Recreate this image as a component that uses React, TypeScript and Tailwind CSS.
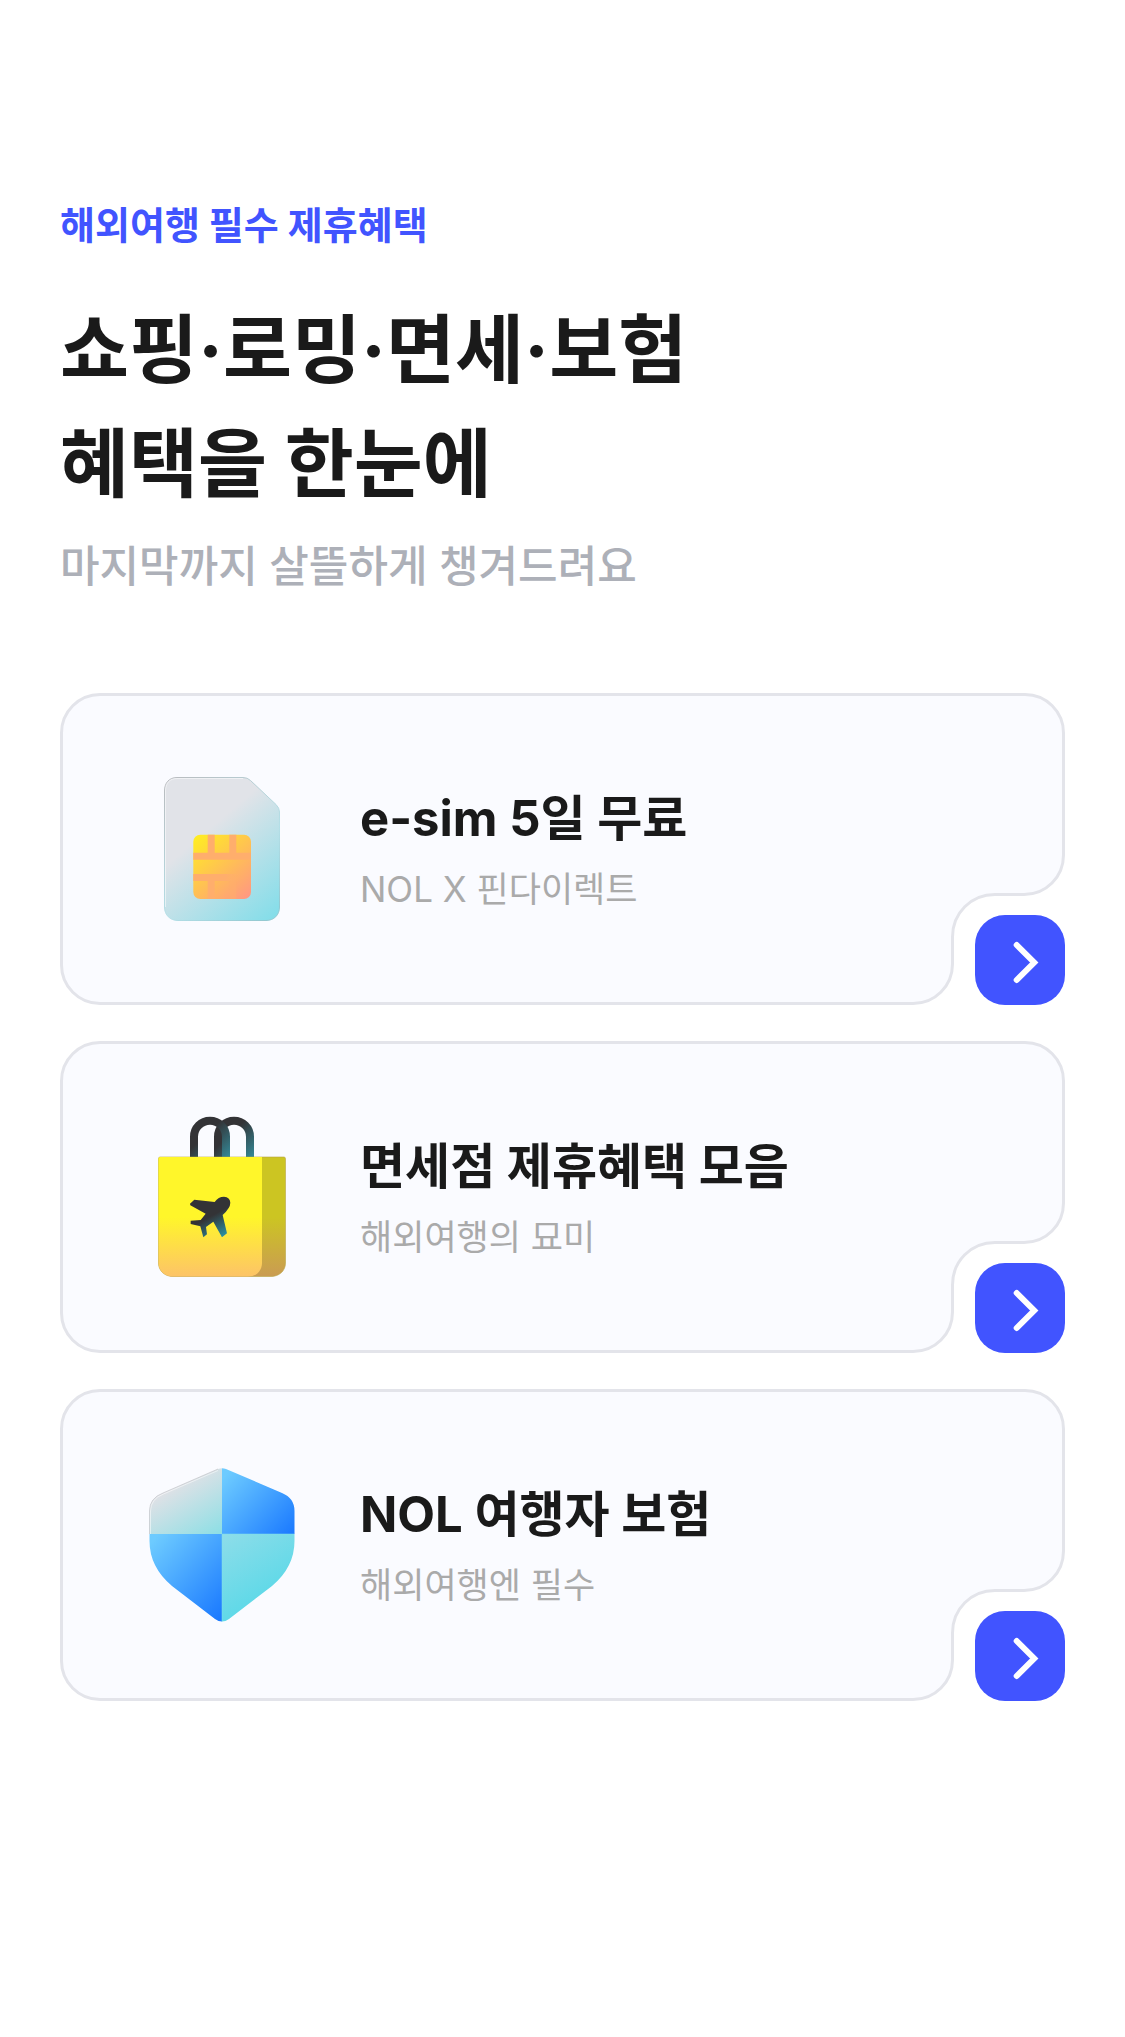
import type { ReactNode } from "react";

interface Benefit {
	title: string;
	description: string;
	icon: ReactNode;
}

function SimIcon() {
	return (
		<svg viewBox="0 0 168 168" className="h-42 w-42 shrink-0" aria-hidden="true">
			<defs>
				<linearGradient id="sim-body" x1="26" y1="20" x2="142" y2="156" gradientUnits="userSpaceOnUse">
					<stop offset="0.35" stopColor="#e1e3e8" />
					<stop offset="1" stopColor="#7fdde9" />
				</linearGradient>
				<linearGradient id="sim-edge" x1="26" y1="12" x2="142" y2="156" gradientUnits="userSpaceOnUse">
					<stop offset="0" stopColor="#b9babd" />
					<stop offset="0.6" stopColor="#b4dfe7" />
					<stop offset="1" stopColor="#8fc5cd" />
				</linearGradient>
				<linearGradient id="sim-chip" x1="55" y1="70" x2="113" y2="134" gradientUnits="userSpaceOnUse">
					<stop offset="0" stopColor="#fff01f" />
					<stop offset="0.6" stopColor="#ffb95c" />
					<stop offset="1" stopColor="#ff9585" />
				</linearGradient>
				<linearGradient id="sim-bar" x1="55" y1="0" x2="102" y2="0" gradientUnits="userSpaceOnUse">
					<stop offset="0.7" stopColor="#ffae6c" />
					<stop offset="1" stopColor="#ffae6c" stopOpacity="0" />
				</linearGradient>
				<clipPath id="sim-chip-clip">
					<rect x="55.3" y="69.7" width="57.7" height="64.3" rx="7" />
				</clipPath>
			</defs>
			<path
				d="M39 12.5H105Q109.5 12.5 112.5 15.5L138 39.5Q141.5 43 141.5 47V142C141.5 150 136 155.5 128 155.5H40C32 155.5 26.5 150 26.5 142V26C26.5 18 31 12.5 39 12.5Z"
				fill="url(#sim-body)"
				stroke="url(#sim-edge)"
			/>
			<path d="M27.5 142V26C27.5 18 32 13.5 39 13.5H105" fill="none" stroke="#fff" strokeOpacity="0.5" />
			<g clipPath="url(#sim-chip-clip)">
				<rect x="55" y="69" width="59" height="66" fill="url(#sim-chip)" />
				<path d="M69.7 69h7v19h-7zM91.3 69h7v19h-7zM55 87.7h59v7H55z" fill="#ffae6c" />
				<path d="M55 109h47v7H55zM69.7 116h7v19h-7z" fill="url(#sim-bar)" />
				<path d="M91.3 116h7v19h-7z" fill="#ffae6c" fillOpacity="0.5" />
			</g>
		</svg>
	);
}

function BagIcon() {
	return (
		<svg viewBox="0 0 168 168" className="h-42 w-42 shrink-0" aria-hidden="true">
			<defs>
				<linearGradient id="bag-handle-l" x1="62" y1="10" x2="96" y2="46" gradientUnits="userSpaceOnUse">
					<stop offset="0.25" stopColor="#333336" />
					<stop offset="0.9" stopColor="#348896" />
				</linearGradient>
				<linearGradient id="bag-handle-r" x1="86" y1="10" x2="120" y2="46" gradientUnits="userSpaceOnUse">
					<stop offset="0.25" stopColor="#333336" />
					<stop offset="0.9" stopColor="#348896" />
				</linearGradient>
				<linearGradient id="bag-front" x1="0" y1="44" x2="0" y2="164" gradientUnits="userSpaceOnUse">
					<stop offset="0.5" stopColor="#fff62a" />
					<stop offset="1" stopColor="#fdc368" />
				</linearGradient>
				<linearGradient id="bag-side" x1="0" y1="44" x2="0" y2="164" gradientUnits="userSpaceOnUse">
					<stop offset="0.5" stopColor="#ccc522" />
					<stop offset="1" stopColor="#ca9b53" />
				</linearGradient>
				<linearGradient id="bag-plane" x1="190" y1="290" x2="256" y2="412" gradientUnits="userSpaceOnUse">
					<stop offset="0.45" stopColor="#333336" />
					<stop offset="1" stopColor="#2a98aa" />
				</linearGradient>
			</defs>
			<path d="M80 45V23.7a16 16 0 0 1 32 0V45" fill="none" stroke="url(#bag-handle-r)" strokeWidth="8" />
			<path d="M56 45V23.7a16 16 0 0 1 32 0V45" fill="none" stroke="url(#bag-handle-l)" strokeWidth="8" />
			<path
				d="M22 44H146Q147.5 44 147.5 46V150C147.5 158 141 163.5 133 163.5H35C27 163.5 20.5 158 20.5 150V46Q20.5 44 22 44Z"
				fill="url(#bag-side)"
				stroke="#b9a545"
				strokeOpacity="0.6"
			/>
			<path d="M22 44H124V150C124 158 118 163.5 110 163.5H35C27 163.5 20.5 158 20.5 150V46Q20.5 44 22 44Z" fill="url(#bag-front)" />
			<path
				transform="translate(2 -13) scale(0.3333)"
				d="M224 306Q235 290 252 290Q270 291 271 308Q271 324 248 345L261 400L246 412L220 365L198 381L201 403L190 412L181 379L152 372L152 362L182 360L197 341L151 316L150 311L163 299Z"
				fill="url(#bag-plane)"
			/>
		</svg>
	);
}

function ShieldIcon() {
	return (
		<svg viewBox="0 0 168 168" className="h-42 w-42 shrink-0" aria-hidden="true">
			<defs>
				<linearGradient id="shield-tl" x1="28" y1="28" x2="62" y2="84" gradientUnits="userSpaceOnUse">
					<stop offset="0" stopColor="#e1e1e6" />
					<stop offset="1" stopColor="#8edfe5" />
				</linearGradient>
				<linearGradient id="shield-tr" x1="84" y1="18" x2="150" y2="78" gradientUnits="userSpaceOnUse">
					<stop offset="0" stopColor="#6dcbff" />
					<stop offset="1" stopColor="#1b7aff" />
				</linearGradient>
				<linearGradient id="shield-bl" x1="16" y1="78" x2="92" y2="146" gradientUnits="userSpaceOnUse">
					<stop offset="0" stopColor="#6dcbff" />
					<stop offset="1" stopColor="#1b7aff" />
				</linearGradient>
				<linearGradient id="shield-br" x1="84" y1="73" x2="124" y2="134" gradientUnits="userSpaceOnUse">
					<stop offset="0" stopColor="#8edde9" />
					<stop offset="1" stopColor="#61d9e8" />
				</linearGradient>
				<clipPath id="shield-clip">
					<path d="M80 8Q84 6.5 88 8L144 32Q156.5 37 156.5 50V80Q156.5 106 134 125L91 158Q84 163 77 158L34 125Q11.5 106 11.5 80V50Q11.5 37 25 32Z" />
				</clipPath>
			</defs>
			<g clipPath="url(#shield-clip)">
				<path d="M0 0H84V73H0Z" fill="url(#shield-tl)" />
				<path d="M84 0H168V73H84Z" fill="url(#shield-tr)" />
				<path d="M0 73H84V168H0Z" fill="url(#shield-bl)" />
				<path d="M84 73H168V168H84Z" fill="url(#shield-br)" />
			</g>
			<path d="M11.5 73V50Q11.5 37 25 32L80 8" fill="none" stroke="#c4c6ca" strokeOpacity="0.7" />
			<path d="M12.5 73V50Q12.5 38 25.5 33L80 9.5" fill="none" stroke="#fff" strokeOpacity="0.5" />
			<path d="M84 160.5V73H156" fill="none" stroke="#7fe0ee" strokeOpacity="0.5" />
		</svg>
	);
}

// Cuts the bottom right corner out of the card and redraws its border around the cut.
function CardNotch() {
	return (
		<svg viewBox="0 0 160 160" className="absolute -right-[3px] -bottom-[3px] h-40 w-40" aria-hidden="true">
			<path d="M160 0V160H0V158.5H8C30 158.5 47.5 141 47.5 119V92C47.5 68 66 49.5 90 49.5H119C141 49.5 158.5 32 158.5 10V0Z" fill="#fff" />
			<path
				d="M0 158.5H8C30 158.5 47.5 141 47.5 119V92C47.5 68 66 49.5 90 49.5H119C141 49.5 158.5 32 158.5 10V0"
				fill="none"
				stroke="#e3e4ea"
				strokeWidth="3"
			/>
		</svg>
	);
}

const BENEFITS: Benefit[] = [
	{ title: "e-sim 5일 무료", description: "NOL X 핀다이렉트", icon: <SimIcon /> },
	{ title: "면세점 제휴혜택 모음", description: "해외여행의 묘미", icon: <BagIcon /> },
	{ title: "NOL 여행자 보험", description: "해외여행엔 필수", icon: <ShieldIcon /> },
];

function BenefitCard({ title, description, icon }: Benefit) {
	return (
		<li className="relative flex min-h-[312px] items-center gap-[54px] rounded-[40px] border-[3px] border-[#e3e4ea] bg-[#fafbff] pr-28 pl-[75px]">
			{icon}
			<div className="pt-2">
				<h2 className="text-[49px] leading-[72px] font-bold text-[#1a1a1a]">{title}</h2>
				<p className="text-[35px] leading-[68px] text-[#aaaaaa]">{description}</p>
			</div>
			<CardNotch />
			<button
				type="button"
				aria-label={title}
				className="absolute -right-[3px] -bottom-[3px] h-[90px] w-[90px] cursor-pointer rounded-[30px] bg-[#4154ff]"
			>
				<svg viewBox="0 0 90 90" className="h-full w-full" fill="none" stroke="#fff" strokeWidth="6" strokeLinecap="round" aria-hidden="true">
					<path d="M41.7 30L59.2 47.5L41.7 65" />
				</svg>
			</button>
		</li>
	);
}

export default function App() {
	return (
		<main className="min-h-screen bg-white px-[60px] pt-[197px] pb-20 font-['Inter','Noto_Sans_CJK_KR',sans-serif]">
			<header>
				<p className="text-[38px] leading-[56px] font-bold text-[#4154ff]">해외여행 필수 제휴혜택</p>
				<h1 className="mt-10 text-[75px] leading-[114px] font-bold text-[#1a1a1a]">
					쇼핑·로밍·면세·보험
					<br />
					혜택을 한눈에
				</h1>
				<p className="mt-[13px] text-[43px] leading-[64px] font-medium text-[#adb0b8]">마지막까지 살뜰하게 챙겨드려요</p>
			</header>
			<ul className="mt-[95px] flex flex-col gap-9">
				{BENEFITS.map((benefit) => (
					<BenefitCard key={benefit.title} {...benefit} />
				))}
			</ul>
		</main>
	);
}
